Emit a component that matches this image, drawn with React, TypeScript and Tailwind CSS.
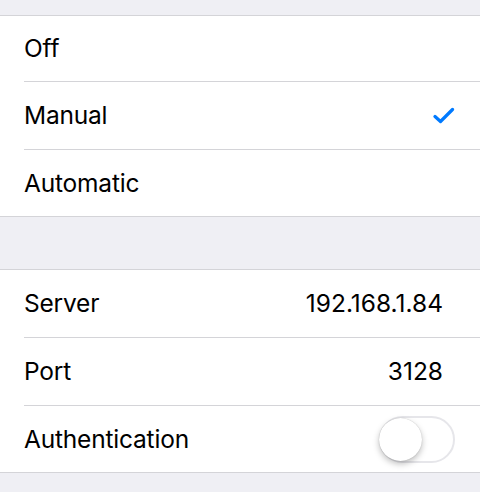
const font = { fontFamily: "Inter, 'Noto Sans', sans-serif" };

const Check = () => (
  <svg width="22" height="18" viewBox="0 0 22 18" className="mr-[-12px]">
    <path d="M2 9.5 L7.5 14.5 L19.5 2.5" fill="none" stroke="#007aff" strokeWidth="3.2" strokeLinecap="round" strokeLinejoin="round" />
  </svg>
);

const Toggle = () => (
  <div className="relative w-[76px] h-[47px] rounded-full border-[2px] border-[#e6e6ea] bg-white mr-[-12px]">
    <div className="absolute left-[-2px] top-[0px] w-[43px] h-[43px] rounded-full bg-white shadow-[0_3px_6px_rgba(0,0,0,0.25),0_0_1px_rgba(0,0,0,0.25)]" />
  </div>
);

const Row = ({ label, right, h, sep }: { label: string; right?: React.ReactNode; h: string; sep?: boolean }) => (
  <div className="pl-6">
    <div className={`flex items-center justify-between pr-[37px] ${h} ${sep ? "border-b border-[#d4d4d8]" : ""}`}>
      <span className="text-[24.5px] text-black tracking-[-0.2px]">{label}</span>
      {right}
    </div>
  </div>
);

export default function App() {
  return (
    <div className="w-[480px] h-[492px] bg-[#efeff4] overflow-hidden" style={font}>
      <div className="h-[15px]" />
      <div className="bg-white border-y border-[#d4d4d8]">
        <Row label="Off" h="h-[66px]" sep />
        <Row label="Manual" h="h-[68px]" sep right={<Check />} />
        <Row label="Automatic" h="h-[66px]" />
      </div>
      <div className="h-[52px]" />
      <div className="bg-white border-y border-[#d4d4d8]">
        <Row label="Server" h="h-[68px]" sep right={<span className="text-[24.5px] text-black">192.168.1.84</span>} />
        <Row label="Port" h="h-[68px]" sep right={<span className="text-[24.5px] text-black">3128</span>} />
        <Row label="Authentication" h="h-[66px]" right={<Toggle />} />
      </div>
    </div>
  );
}
